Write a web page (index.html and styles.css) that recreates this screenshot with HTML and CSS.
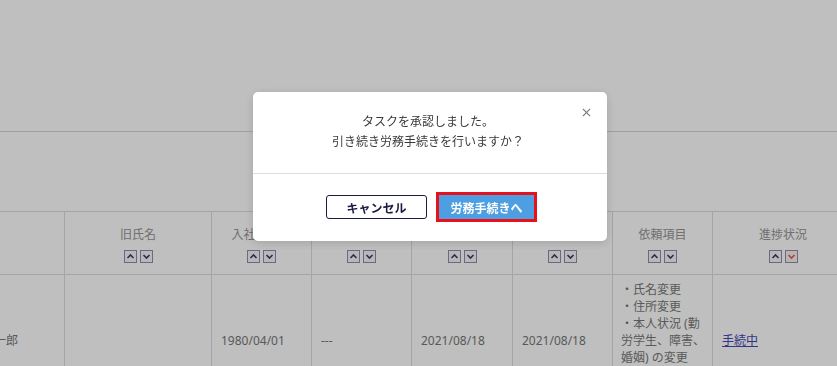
FILE: index.html
```html
<!DOCTYPE html>
<html lang="ja">
<head>
  <meta charset="UTF-8">
  <meta name="viewport" content="width=device-width, initial-scale=1.0">
  <title>タスク承認</title>
  <link rel="stylesheet" href="styles.css">
</head>
<body>
  <div class="page">
    <div class="toolbar"></div>

    <table class="task-table">
      <colgroup>
        <col class="col-name">
        <col class="col-old">
        <col class="col-date">
        <col class="col-date">
        <col class="col-date-wide">
        <col class="col-date">
        <col class="col-items">
        <col class="col-status">
      </colgroup>
      <thead>
        <tr>
          <th></th>
          <th><div class="th-label">旧氏名</div><div class="sort"><span class="sort-btn"><svg viewBox="0 0 11 11"><polyline points="2.5,7 5.5,4 8.5,7"/></svg></span><span class="sort-btn"><svg viewBox="0 0 11 11"><polyline points="2.5,4 5.5,7 8.5,4"/></svg></span></div></th>
          <th><div class="th-label">入社年月日</div><div class="sort"><span class="sort-btn"><svg viewBox="0 0 11 11"><polyline points="2.5,7 5.5,4 8.5,7"/></svg></span><span class="sort-btn"><svg viewBox="0 0 11 11"><polyline points="2.5,4 5.5,7 8.5,4"/></svg></span></div></th>
          <th><div class="th-label">退職日</div><div class="sort"><span class="sort-btn"><svg viewBox="0 0 11 11"><polyline points="2.5,7 5.5,4 8.5,7"/></svg></span><span class="sort-btn"><svg viewBox="0 0 11 11"><polyline points="2.5,4 5.5,7 8.5,4"/></svg></span></div></th>
          <th><div class="th-label">申請日</div><div class="sort"><span class="sort-btn"><svg viewBox="0 0 11 11"><polyline points="2.5,7 5.5,4 8.5,7"/></svg></span><span class="sort-btn"><svg viewBox="0 0 11 11"><polyline points="2.5,4 5.5,7 8.5,4"/></svg></span></div></th>
          <th><div class="th-label">承認日</div><div class="sort"><span class="sort-btn"><svg viewBox="0 0 11 11"><polyline points="2.5,7 5.5,4 8.5,7"/></svg></span><span class="sort-btn"><svg viewBox="0 0 11 11"><polyline points="2.5,4 5.5,7 8.5,4"/></svg></span></div></th>
          <th><div class="th-label">依頼項目</div><div class="sort"><span class="sort-btn"><svg viewBox="0 0 11 11"><polyline points="2.5,7 5.5,4 8.5,7"/></svg></span><span class="sort-btn"><svg viewBox="0 0 11 11"><polyline points="2.5,4 5.5,7 8.5,4"/></svg></span></div></th>
          <th><div class="th-label">進捗状況</div><div class="sort"><span class="sort-btn"><svg viewBox="0 0 11 11"><polyline points="2.5,7 5.5,4 8.5,7"/></svg></span><span class="sort-btn active"><svg viewBox="0 0 11 11"><polyline points="2.5,4 5.5,7 8.5,4"/></svg></span></div></th>
        </tr>
      </thead>
      <tbody>
        <tr>
          <td>山田　一郎</td>
          <td></td>
          <td>1980/04/01</td>
          <td>---</td>
          <td>2021/08/18</td>
          <td>2021/08/18</td>
          <td class="items">・氏名変更<br>・住所変更<br>・本人状況 (勤<br>労学生、障害、<br>婚姻) の変更<br>・扶養変更<br>・口座変更</td>
          <td><a href="#" class="status-link">手続中</a></td>
        </tr>
      </tbody>
    </table>
  </div>

  <div class="backdrop">
    <div class="dialog">
      <button class="close-btn" aria-label="閉じる">
        <svg viewBox="0 0 10 10"><line x1="1" y1="1" x2="9" y2="9"/><line x1="9" y1="1" x2="1" y2="9"/></svg>
      </button>
      <div class="dialog-body">
        <p>タスクを承認しました。</p>
        <p>引き続き労務手続きを行いますか？</p>
      </div>
      <div class="dialog-footer">
        <button class="cancel-btn">キャンセル</button>
        <button class="primary-btn">労務手続きへ</button>
      </div>
    </div>
  </div>
</body>
</html>
```

FILE: styles.css
```css
* {
  margin: 0;
  padding: 0;
  box-sizing: border-box;
}

html, body {
  height: 100%;
  overflow: hidden;
}

body {
  font-family: "Noto Sans", "Noto Sans CJK JP", sans-serif;
  font-size: 12px;
  color: #333;
  background: #fff;
}

.toolbar {
  height: 132px;
  border-bottom: 1px solid #d6d6d6;
  margin-bottom: 79px;
}

.task-table {
  border-collapse: collapse;
  table-layout: fixed;
  width: 905px;
  margin-left: -52px;
  border-top: 1px solid #dcdcdc;
}

.col-name { width: 116px; }
.col-old { width: 147px; }
.col-date { width: 100px; }
.col-date-wide { width: 101px; }
.col-items { width: 100px; }
.col-status { width: 141px; }

.task-table th,
.task-table td {
  border: 1px solid #dcdcdc;
}

.task-table th {
  font-weight: normal;
  color: #959595;
  padding: 14px 0 11px;
  text-align: center;
  vertical-align: top;
}

.th-label {
  line-height: 17px;
  height: 17px;
  margin-bottom: 7px;
}

.sort {
  display: flex;
  justify-content: center;
  gap: 3px;
}

.sort-btn {
  width: 13px;
  height: 13px;
  border: 1px solid #8c8caa;
  background: #f6f6fb;
  display: flex;
  align-items: center;
  justify-content: center;
}

.sort-btn svg {
  width: 11px;
  height: 11px;
  fill: none;
  stroke: #3a3a5c;
  stroke-width: 1.6;
}

.sort-btn.active {
  background: #fbeeee;
}

.sort-btn.active svg {
  stroke: #e25a5a;
}

.task-table td {
  color: #777;
  line-height: 17px;
  padding: 6px 9px;
  vertical-align: middle;
}

.task-table td.items {
  padding: 6px 2px 6px 8px;
  white-space: nowrap;
}

.status-link {
  color: #4646b4;
  text-decoration: underline;
}

/* modal */
.backdrop {
  position: fixed;
  inset: 0;
  background: rgba(0, 0, 0, 0.25);
  display: flex;
  justify-content: center;
  align-items: flex-start;
  padding: 92px 0 0 23px;
}

.dialog {
  position: relative;
  width: 354px;
  background: #fff;
  border-radius: 5px;
  box-shadow: 0 2px 10px rgba(0, 0, 0, 0.15);
  font-family: "Noto Sans CJK JP", sans-serif;
}

.close-btn {
  position: absolute;
  top: 16px;
  right: 16px;
  width: 9px;
  height: 9px;
  border: none;
  background: none;
  cursor: pointer;
}

.close-btn svg {
  display: block;
  width: 9px;
  height: 9px;
  stroke: #777;
  stroke-width: 1.3;
}

.dialog-body {
  padding: 19px 20px 22px 16px;
  text-align: center;
  line-height: 20px;
  font-size: 12px;
  color: #3a3a3a;
  border-bottom: 1px solid #dedede;
}

.dialog-footer {
  display: flex;
  justify-content: center;
  align-items: center;
  gap: 9px;
  padding: 18px 0 19px 3px;
}

.cancel-btn,
.primary-btn {
  font-family: "Noto Sans CJK JP", sans-serif;
  font-size: 12px;
  font-weight: 700;
  width: 101px;
  cursor: pointer;
}

.cancel-btn {
  height: 24px;
  background: #fff;
  color: #1b1b40;
  border: 1px solid #1b1b40;
  border-radius: 3px;
}

.primary-btn {
  height: 30px;
  background: #4d9fe2;
  color: #fff;
  border: 3px solid #e8101a;
}
```
